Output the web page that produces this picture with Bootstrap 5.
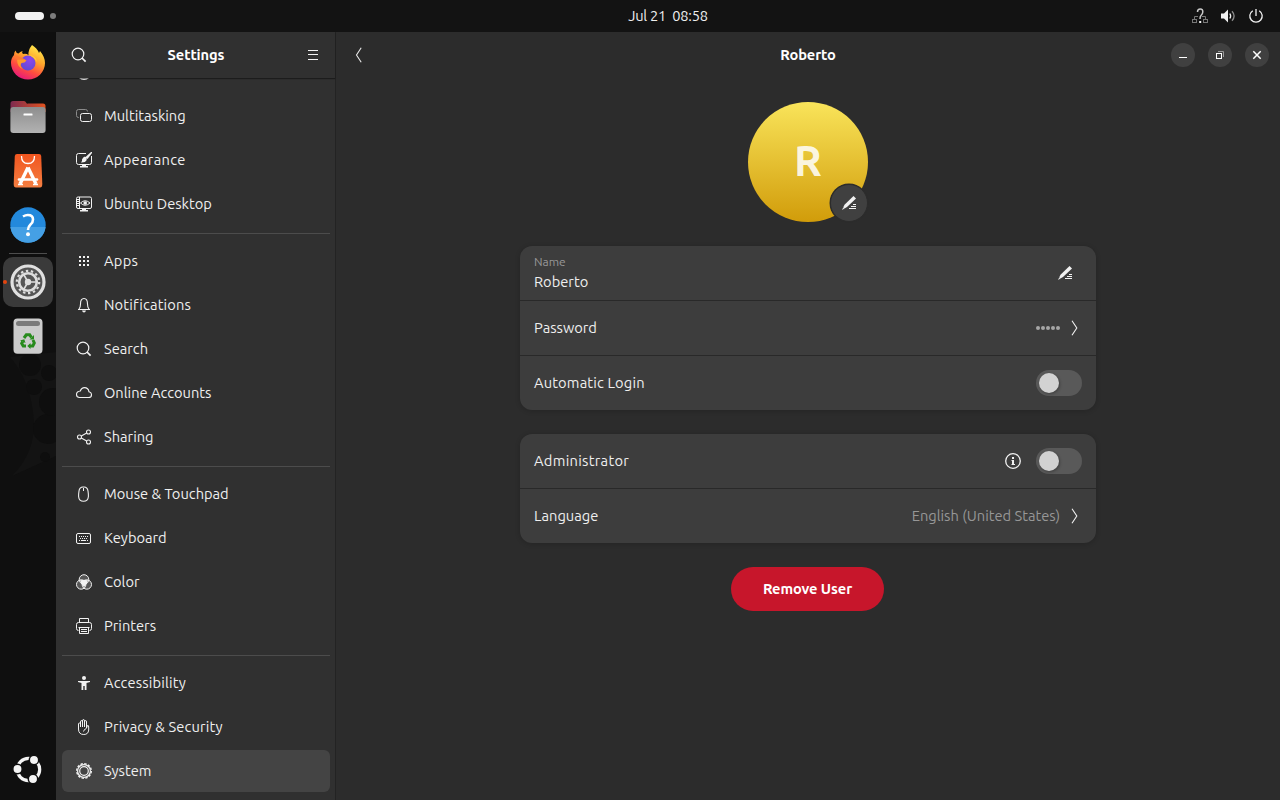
<!DOCTYPE html>
<html lang="en" data-bs-theme="dark">
<head>
<meta charset="utf-8">
<meta name="viewport" content="width=device-width, initial-scale=1">
<title>Settings</title>
<link href="https://cdn.jsdelivr.net/npm/bootstrap@5.3.0/dist/css/bootstrap.min.css" rel="stylesheet">
<style>
body{font-family:Ubuntu,"Noto Sans","Open Sans",sans-serif;font-size:14.667px;font-weight:400;line-height:20px;color:#efefef;background:#2c2c2c}
svg{display:block;flex:none}
.ic{width:16px;height:16px;fill:none;stroke:#f2f2f2;stroke-width:1}
.ic .f{fill:#f2f2f2;stroke:none}
.split{grid-template-columns:1fr auto 1fr}
.topbar{height:32px;background:#131313;padding-left:56px}
.topbar .clock{font-size:14.667px;letter-spacing:-.25px;white-space:pre}
.spaces{gap:6px;margin-left:-41px}
.tray{gap:12px;margin-right:16px}
.pill{width:29px;height:8px;border-radius:4px;background:#f2f2f2}
.pip{width:6px;height:6px;border-radius:50%;background:#7d7d7d}
.desk{min-height:0}
.dock{width:56px;background:#0f0f0f;padding-top:6px;padding-bottom:6px;z-index:0}
.wall{left:0;top:160px;z-index:-1}
.slot{width:50px;height:50px;border-radius:10px;margin-bottom:4px}
.slot.active{background:#3a3a3a}
.slot.tight{margin-bottom:3px}
.dock-rule{width:38px;height:1px;background:#4d4d4d;margin-bottom:3px}
.run-dot{width:4px;height:4px;border-radius:50%;background:#e2440e;left:0;top:23px}
.side{width:280px;background:#303030;border-right:1px solid #232323}
.side-head{height:46px;padding:0 14px 0 15px;box-shadow:0 1px 1px rgba(0,0,0,.4);z-index:1}
.ttl{font-weight:700;letter-spacing:-.1px;color:#fff}
.side-list{padding:0 5px 6px 6px;min-height:0}
.item{height:42px;border-radius:6px;padding:0 14px;gap:12px;margin-bottom:2px;flex:none;color:#efefef}
.item.on{background:#444}
.loose{letter-spacing:.16px}
.looser{letter-spacing:.3px}
.rule{height:1px;background:#4c4c4c;margin:6px 0;flex:none}
.main-head{height:46px;padding:0 11px}
.wbtn{width:24px;height:24px;border-radius:50%;background:#404040}
.wbtns{gap:13px}
.content{width:576px;margin:24px auto 0}
.avatar{width:120px;height:120px;border-radius:50%;background:linear-gradient(#f9e45a,#d19c0a);font-size:42.500px;font-weight:600;line-height:1;color:rgba(255,255,255,.85)}
.initial{margin-bottom:4px}
.avatar-edit{width:38px;height:38px;border-radius:50%;background:#404040;border:1px solid #2c2c2c;box-shadow:0 0 0 .5px #2c2c2c;left:82px;top:82px}
.box{background:#3d3d3d;border-radius:12px;box-shadow:0 1px 4px 1px rgba(0,0,0,.13);margin-top:24px}
.line{height:54px;padding:0 14px}
.line+.line{border-top:1px solid #292929;height:55px}
.line.wide-end{padding-right:23px}
.chev{margin-left:7px;margin-right:-1px}
.info{margin-right:15px}
.cap{font-size:12px;line-height:18px;margin-top:-1px;padding-bottom:1px;color:#979797}
.dim{color:#979797}
.tog{width:46px;height:26px;border-radius:13px;background:#595959;padding:3px}
.tog i{width:20px;height:20px;border-radius:50%;background:#d2d2d2;box-shadow:1px 1px 3px rgba(0,0,0,.3)}
.remove{width:153px;height:44px;border-radius:22px;background:#c7162b;margin:24px 1px 0 0;font-size:14.667px;line-height:20px;font-weight:700;letter-spacing:-.1px;color:#fff}
</style>
</head>
<body class="vh-100 overflow-hidden d-flex flex-column">
<header class="topbar split d-grid align-items-center flex-shrink-0">
  <div class="spaces d-flex align-items-center"><span class="pill"></span><span class="pip"></span></div>
  <span class="clock">Jul 21  08:58</span>
  <div class="tray d-flex justify-content-end">
    <svg class="ic" viewBox="0 0 16 16"><g stroke="#777"><rect x=".5" y="11.500" width="4" height="3"/><rect x="11.500" y="11.500" width="4" height="3"/><path d="M2.500 11V8.500H6M13.500 11V8.500H10"/></g><path d="M5.500 4Q5.500 1 8.300 1Q11 1 10.800 4Q10.700 6 9 7.500Q8 8.500 8 11" stroke="#c8c8c8" stroke-width="1.500"/><rect class="f" x="7.200" y="13" width="2" height="2"/></svg>
    <svg class="ic" viewBox="0 0 16 16"><path class="f" d="M1 5.500H4L8 1.500V14.500L4 10.500H1z"/><path d="M9.800 5.500Q11.500 8 9.800 10.500" stroke-width="1.300"/><path d="M12 3.300Q16.200 8 12 12.700" stroke="#8b8b8b" stroke-width="1.300"/></svg>
    <svg class="ic" viewBox="0 0 16 16"><path d="M4.800 2.700A6.200 6.200 0 1 0 11.200 2.700M8 1V8" stroke-width="1.300"/></svg>
  </div>
</header>
<div class="desk d-flex flex-grow-1">
  <nav class="dock d-flex flex-column align-items-center position-relative flex-shrink-0">
    <svg class="wall position-absolute" width="56" height="310" viewBox="0 0 56 310"><path d="M10 165L56 160V264L12 284Q34 262 34 232Q32 190 10 165z" fill="#131313"/><g fill="#0e0e0e"><circle cx="30" cy="173" r="11"/><circle cx="49" cy="181" r="8"/><circle cx="34" cy="195" r="8"/><circle cx="48" cy="237" r="15"/><circle cx="53" cy="210" r="14"/><circle cx="45" cy="265" r="5"/></g></svg>
    <a class="slot d-flex align-items-center justify-content-center" href="#" aria-label="Firefox"><svg width="36" height="36" viewBox="0 0 36 36"><defs><linearGradient id="fx" x1=".8" y1="0" x2=".3" y2="1"><stop offset="0" stop-color="#fff14f"/><stop offset=".4" stop-color="#ffa52b"/><stop offset=".7" stop-color="#ff4d3f"/><stop offset="1" stop-color="#e5167f"/></linearGradient><radialGradient id="fp" cx=".6" cy=".3" r=".8"><stop offset="0" stop-color="#8f45ec"/><stop offset="1" stop-color="#5b4bd0"/></radialGradient></defs><path d="M22 0Q27 3 29 8L30 6Q35 12 35 18A17 16.500 0 0 1 1 18Q1 13 4 10Q4 7 5.500 5.500Q6 8 8.500 8.500Q10 6.500 12.500 6Q11.500 8 13 9Q16 8 18.500 10Q18 5 22 0z" fill="url(#fx)"/><circle cx="18" cy="18" r="7.500" fill="url(#fp)"/><path d="M7 14Q12 12 16.500 15.500Q15 18 11.500 18Q9 21 13 24Q7 22 7 14z" fill="#ff9a2b"/><path d="M4 10Q9 11 16.500 15.500Q12 14 7 15Q7 12 4 10z" fill="#ff7a32"/><path d="M18.500 10Q26 10 27 17Q24 12 18.500 10z" fill="#ffca3a"/></svg></a>
    <a class="slot d-flex align-items-center justify-content-center" href="#" aria-label="Files"><svg width="36" height="34" viewBox="0 0 36 34"><defs><linearGradient id="fo"><stop offset="0" stop-color="#7e2a50"/><stop offset="1" stop-color="#e2531f"/></linearGradient><linearGradient id="fg" x2="0" y2="1"><stop stop-color="#8e8e8e"/><stop offset="1" stop-color="#b2b2b2"/></linearGradient></defs><path d="M.5 12V3.500Q.5 1 3 1H14Q15.500 1 16 2.500T18 3.500H33Q35.500 3.500 35.500 6V12z" fill="url(#fo)"/><rect x=".4" y="7" width="35.200" height="26" rx="3" fill="url(#fg)"/><rect x="13.500" y="13.500" width="9" height="2" rx=".5" fill="#fff"/></svg></a>
    <a class="slot d-flex align-items-center justify-content-center" href="#" aria-label="App Center"><svg width="36" height="36" viewBox="0 0 36 36"><defs><linearGradient id="ac" x2="0" y2="1"><stop stop-color="#f1551f"/><stop offset="1" stop-color="#f47f42"/></linearGradient></defs><path d="M7 1H29Q31 1 31.200 3L32.300 31Q32.300 34.500 30 34.500H6Q3.700 34.500 3.700 31L4.800 3Q5 1 7 1z" fill="url(#ac)"/><path d="M11.500 3Q11.500 10.500 18 10.500T24.500 3" fill="none" stroke="#fff" stroke-width="1.300"/><path d="M18 14.500L10 31M18 14.500L26 31" fill="none" stroke="#fff" stroke-width="3.400"/><path d="M9 26.500H27" stroke="#fff" stroke-width="2.600" stroke-linecap="round"/><path d="M8 31.500H13M23 31.500H28" stroke="#fff" stroke-width="1.600"/></svg></a>
    <a class="slot tight d-flex align-items-center justify-content-center" href="#" aria-label="Help"><svg width="36" height="36" viewBox="0 0 36 36"><circle cx="18" cy="18" r="17.700" fill="#2389dc"/><path d="M.4 20H35.600A17.700 17.700 0 0 1 .4 20z" fill="#45a0e5"/><path d="M13 9.500Q15.500 8 17.800 8Q23 8 23 12.500Q23 15.500 20.500 17.500Q18 19.800 18 23" fill="none" stroke="#fff" stroke-width="2.600"/><circle cx="18" cy="27.300" r="2" fill="#fff"/></svg></a>
    <span class="dock-rule"></span>
    <a class="slot active d-flex align-items-center justify-content-center position-relative" href="#" aria-label="Settings"><span class="run-dot position-absolute"></span><svg width="36" height="36" viewBox="0 0 36 36"><circle cx="18" cy="18" r="16" fill="#555" stroke="#e0e0e0" stroke-width="3.200"/><circle cx="18" cy="18" r="11.200" fill="none" stroke="#ddd" stroke-width="2.200" stroke-dasharray="2.400 2.627"/><circle cx="18" cy="18" r="8.800" fill="none" stroke="#ddd" stroke-width="2.600"/><circle cx="18" cy="18" r="3.200" fill="#ddd"/><path d="M18 18H26M18 18L14 11M18 18L14 25" stroke="#ddd" stroke-width="1.600"/></svg></a>
    <a class="slot d-flex align-items-center justify-content-center" href="#" aria-label="Trash"><svg width="36" height="36" viewBox="0 0 36 36"><rect x="3.500" y=".5" width="29" height="35.300" rx="4" fill="#ccc"/><rect x="6" y="3" width="24" height="5" rx="2.500" fill="#7b7b7b"/><g fill="none" stroke="#278b1c" stroke-width="3"><path d="M14 20L16.300 16.800H19.700L21.500 19.500"/><path d="M23 22L24.300 25L22.800 28H19.500"/><path d="M16 28H13.200L11.700 25.500L12.700 23.500"/></g><path d="M24 17V21.500H19.500zM20.500 25V31L17.300 28zM10 22.500L14.300 21.300L15.500 25z" fill="#278b1c"/></svg></a>
    <a class="slot mt-auto mb-0 d-flex align-items-center justify-content-center" href="#" aria-label="Show Apps"><svg width="32" height="32" viewBox="0 0 32 32"><circle cx="16.500" cy="16.500" r="11.200" fill="none" stroke="#f4f4f4" stroke-width="3.200"/><g fill="#f4f4f4" stroke="#0f0f0f" stroke-width="1.500"><circle cx="5.500" cy="16" r="4.700"/><circle cx="22" cy="7" r="4.700"/><circle cx="21" cy="26" r="4.700"/></g></svg></a>
  </nav>
  <aside class="side d-flex flex-column flex-shrink-0">
    <div class="side-head d-flex align-items-center justify-content-between position-relative flex-shrink-0">
      <svg class="ic" viewBox="0 0 16 16"><circle cx="7" cy="7" r="5.800" stroke-width="1.200"/><path d="M11 11L14.600 14.600" stroke-width="1.700"/></svg>
      <span class="ttl">Settings</span>
      <svg class="ic" viewBox="0 0 16 16"><path d="M3 3.500H13M3 7.500H13M3 12.500H13"/></svg>
    </div>
    <div class="side-list d-flex flex-column justify-content-end flex-grow-1 overflow-hidden">
      <a class="item d-flex align-items-center" href="#" aria-label="Power"><svg class="ic" viewBox="0 0 16 16"><path d="M4.800 3A6.500 6.500 0 1 0 11.200 3M8 1V8" stroke-width="1.600"/></svg></a>
      <a class="item d-flex align-items-center text-decoration-none" href="#"><svg class="ic" viewBox="0 0 16 16"><path d="M3 9.500H2.500Q.5 9.500 .5 7.500V3.500Q.5 1.500 2.500 1.500H9.500Q11.500 1.500 11.500 3.500" stroke="#8b8b8b"/><rect x="4.500" y="5.500" width="11" height="8" rx="2"/></svg><span>Multitasking</span></a>
      <a class="item d-flex align-items-center text-decoration-none" href="#"><svg class="ic" viewBox="0 0 16 16"><path d="M10 1.500H2.500Q.5 1.500 .5 3.500V10.500Q.5 12.500 2.500 12.500H13.500Q15.500 12.500 15.500 10.500V4"/><path class="f" d="M15 0H16V1L11.500 7L9.300 5.200zM9 4.500Q11.200 6 10.700 8Q9.500 10.700 5 10.500Q6.500 9 6 7.500Q7 4.800 9 4.500zM6 12H10V14H12V15.500H4V14H6z"/></svg><span class="looser">Appearance</span></a>
      <a class="item d-flex align-items-center text-decoration-none" href="#"><svg class="ic" viewBox="0 0 16 16"><rect x=".5" y="1" width="15" height="11.500" rx="1.500"/><path d="M3.500 1V12M1 3.500H3M1 5.500H3M1 7.500H3M1 9.500H3M4.500 7Q9 2.500 14 7Q9 11.500 4.500 7z"/><circle class="f" cx="9.200" cy="7" r="1.800"/><path class="f" d="M6 12H10V14H12V15.500H4V14H6z"/></svg><span>Ubuntu Desktop</span></a>
      <div class="rule"></div>
      <a class="item d-flex align-items-center text-decoration-none" href="#"><svg class="ic" viewBox="0 0 16 16"><path class="f" d="M3 3h2v2H3zM7 3h2v2H7zM11 3h2v2h-2zM3 7h2v2H3zM7 7h2v2H7zM11 7h2v2h-2zM3 11h2v2H3zM7 11h2v2H7zM11 11h2v2h-2z"/></svg><span class="looser">Apps</span></a>
      <a class="item d-flex align-items-center text-decoration-none" href="#"><svg class="ic" viewBox="0 0 16 16"><path d="M2 12.500H14M3 12Q4.500 10.500 4.500 7Q4.500 1.500 8 1.500T11.500 7Q11.500 10.500 13 12" stroke-width="1.100"/><path class="f" d="M6 13.500H10Q9.500 15.500 8 15.500T6 13.500z"/></svg><span class="loose">Notifications</span></a>
      <a class="item d-flex align-items-center text-decoration-none" href="#"><svg class="ic" viewBox="0 0 16 16"><circle cx="7" cy="7" r="5.800" stroke-width="1.200"/><path d="M11 11L14.600 14.600" stroke-width="1.700"/></svg><span>Search</span></a>
      <a class="item d-flex align-items-center text-decoration-none" href="#"><svg class="ic" viewBox="0 0 16 16"><path d="M3.500 12.500H12.500Q15.500 12.500 15.500 9.700Q15.500 7.300 13 6.800Q12.300 2.600 8.500 2.600Q5.500 2.600 4.300 6Q.5 6.500 .5 9.500Q.5 12.500 3.500 12.500z" stroke-width="1.100"/></svg><span>Online Accounts</span></a>
      <a class="item d-flex align-items-center text-decoration-none" href="#"><svg class="ic" viewBox="0 0 16 16"><g stroke-width="1.100"><circle cx="3.500" cy="8" r="2"/><circle cx="12.500" cy="3" r="2"/><circle cx="12.500" cy="13" r="2"/><path d="M5.300 7L10.700 4M5.300 9L10.700 12"/></g></svg><span>Sharing</span></a>
      <div class="rule"></div>
      <a class="item d-flex align-items-center text-decoration-none" href="#"><svg class="ic" viewBox="0 0 16 16"><path d="M7.500 1Q3.500 .7 3 5Q2.500 8 2.600 10.500Q3 15.300 7.500 15.300T12.400 10.500Q12.500 8 12 5Q11.500 .7 7.500 1z" stroke-width="1.100"/><path d="M7.500 2V5"/></svg><span>Mouse &amp; Touchpad</span></a>
      <a class="item d-flex align-items-center text-decoration-none" href="#"><svg class="ic" viewBox="0 0 16 16"><rect x=".5" y="3.500" width="14" height="10" rx="1.500"/><path d="M3 6.500H13M4 8.500H12" stroke-dasharray="1 1"/><path d="M3 10.500H4M5 10.500H10M11 10.500H12"/></svg><span>Keyboard</span></a>
      <a class="item d-flex align-items-center text-decoration-none" href="#"><svg class="ic" viewBox="0 0 16 16"><circle cx="8" cy="5.500" r="4.800" fill="#f2f2f2" fill-opacity=".2"/><circle cx="5.200" cy="10.500" r="4.700" fill="#f2f2f2" fill-opacity=".2"/><circle cx="10.800" cy="10.500" r="4.700" fill="#f2f2f2" fill-opacity=".2"/><path class="f" d="M4 6.500Q8 5 12 6.500Q11 10 8 13Q5 10 4 6.500z"/></svg><span>Color</span></a>
      <a class="item d-flex align-items-center text-decoration-none" href="#"><svg class="ic" viewBox="0 0 16 16"><path d="M3.500 4.500V.5H12.500V4.500M2.500 12.500Q.5 12.500 .5 10.500V6.500Q.5 4.500 2.500 4.500H13.500Q15.500 4.500 15.500 6.500V10.500Q15.500 12.500 13.500 12.500M3.500 10V15.500H12.500V10M2.500 9.500H13.500M5 11.500H11M5 13.500H11"/></svg><span>Printers</span></a>
      <div class="rule"></div>
      <a class="item d-flex align-items-center text-decoration-none" href="#"><svg class="ic" viewBox="0 0 16 16"><circle class="f" cx="8" cy="3" r="2"/><path class="f" d="M2 6H14V7L10.500 8V15H8.700V11H7.300V15H5.500V8L2 7z"/></svg><span class="loose">Accessibility</span></a>
      <a class="item d-flex align-items-center text-decoration-none" href="#"><svg class="ic" viewBox="0 0 16 16"><path d="M2.500 10V5Q2.500 4 3.500 4T4.500 5V8V3Q4.500 1.500 5.500 1.500T6.500 3V8V2Q6.500 .5 7.500 .5T8.500 2V8V3Q8.500 1.500 9.500 1.500T10.500 3V9L11.500 6.500Q12.700 6 12.700 8V11Q12.300 15.500 7.800 15.500Q2.500 15.500 2.500 10z"/><path d="M7.500 12.500Q8 10 10.500 9.500"/></svg><span class="loose">Privacy &amp; Security</span></a>
      <a class="item on d-flex align-items-center text-decoration-none" href="#"><svg class="ic" viewBox="0 0 16 16"><circle cx="8" cy="8" r="7.300" stroke-width="1.400" stroke-dasharray="2.400 1.422"/><circle cx="8" cy="8" r="6.400" stroke-width="1.200"/><circle cx="8" cy="8" r="4.300" stroke-width="1.200"/></svg><span>System</span></a>
    </div>
  </aside>
  <main class="flex-grow-1">
    <div class="main-head split d-grid align-items-center">
      <svg width="24" height="24" viewBox="0 0 24 24" fill="none" stroke="#e8e8e8" stroke-width="1.100"><path d="M14.200 4.800L9.500 12L14.200 19.200"/></svg>
      <span class="ttl">Roberto</span>
      <div class="wbtns d-flex justify-content-end">
        <span class="wbtn"><svg width="24" height="24" viewBox="0 0 24 24"><path d="M8 14.500H16" stroke="#fff"/></svg></span>
        <span class="wbtn"><svg width="24" height="24" viewBox="0 0 24 24" fill="none" stroke="#fff"><path d="M10 8.500H15.500V14" stroke="#999"/><rect x="8.500" y="10.500" width="5" height="5"/></svg></span>
        <span class="wbtn"><svg width="24" height="24" viewBox="0 0 24 24" stroke="#fff" stroke-width="1.500"><path d="M8.300 8.300L15.700 15.700M15.700 8.300L8.300 15.700"/></svg></span>
      </div>
    </div>
    <section class="content d-flex flex-column align-items-center">
      <div class="avatar position-relative d-flex align-items-center justify-content-center"><span class="initial">R</span>
        <span class="avatar-edit position-absolute d-flex align-items-center justify-content-center"><svg class="ic" viewBox="0 0 16 16"><path class="f" d="M12.500 1L15 3.500L6 12L1 15L3.500 9.700z"/><path d="M2.300 12.500L4 14" stroke="#888"/><path d="M12 9.500H15M10 11.500H15M8 13.500H15"/></svg></span>
      </div>
      <div class="box w-100">
        <div class="line wide-end d-flex align-items-center justify-content-between"><div><div class="cap">Name</div><div>Roberto</div></div><svg class="ic" viewBox="0 0 16 16"><path class="f" d="M12.500 1L15 3.500L6 12L1 15L3.500 9.700z"/><path d="M2.300 12.500L4 14" stroke="#888"/><path d="M12 9.500H15M10 11.500H15M8 13.500H15"/></svg></div>
        <div class="line d-flex align-items-center"><span class="me-auto">Password</span><svg width="24" height="4" viewBox="0 0 24 4" fill="#a6a6a6"><circle cx="2" cy="2" r="2"/><circle cx="7" cy="2" r="2"/><circle cx="12" cy="2" r="2"/><circle cx="17" cy="2" r="2"/><circle cx="22" cy="2" r="2"/></svg><svg class="ic chev" viewBox="0 0 16 16"><path d="M5 .8L9.800 8L5 15.200" stroke-width="1.100"/></svg></div>
        <div class="line d-flex align-items-center justify-content-between"><span class="loose">Automatic Login</span><span class="tog d-flex"><i></i></span></div>
      </div>
      <div class="box w-100">
        <div class="line d-flex align-items-center"><span class="me-auto looser">Administrator</span><svg class="ic info" viewBox="0 0 16 16"><circle cx="8" cy="8" r="7.300" stroke-width="1.300"/><path class="f" d="M7 4h2v2H7zM6.500 7H9V11H10V12H6.500V11H7V8H6.500z"/></svg><span class="tog d-flex"><i></i></span></div>
        <div class="line d-flex align-items-center"><span class="me-auto">Language</span><span class="dim">English (United States)</span><svg class="ic chev" viewBox="0 0 16 16"><path d="M5 .8L9.800 8L5 15.200" stroke-width="1.100"/></svg></div>
      </div>
      <button class="remove btn p-0">Remove User</button>
    </section>
  </main>
</div>
<script src="https://cdn.jsdelivr.net/npm/bootstrap@5.3.0/dist/js/bootstrap.bundle.min.js"></script>
</body>
</html>
